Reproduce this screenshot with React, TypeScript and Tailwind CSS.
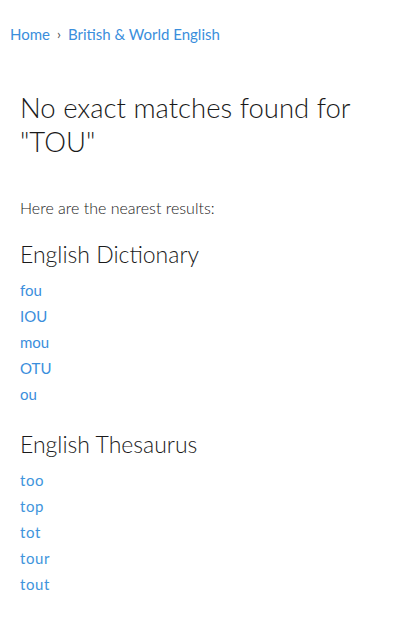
import React from "react";

const dict = ["fou", "IOU", "mou", "OTU", "ou"];
const thes = ["too", "top", "tot", "tour", "tout"];

export default function App() {
  return (
    <div className="w-[400px] min-h-[639px] bg-white text-[#222] font-['Lato',sans-serif]">
      <nav className="flex items-center pl-[10px] pt-[24px] text-[15px] leading-[20px] text-[#3a8edc]">
        <a>Home</a>
        <span className="mx-[7px] text-[#555] text-[14px]">›</span>
        <a>British &amp; World English</a>
      </nav>
      <main className="px-[20px]">
        <h1 className="mt-[47px] text-[27.5px] leading-[34px] font-light text-[#1a1a1a]">
          No exact matches found for "TOU"
        </h1>
        <p className="mt-[39px] text-[16px] leading-[20px] font-light text-[#1a1a1a]">Here are the nearest results:</p>
        <h2 className="mt-[22px] text-[23px] leading-[28px] font-light text-[#1a1a1a]">English Dictionary</h2>
        <ul className="mt-[9px] flex flex-col">
          {dict.map((w) => (
            <li key={w} className="h-[26px] text-[15px] leading-[26px] text-[#3a8edc]">
              {w}
            </li>
          ))}
        </ul>
        <h2 className="mt-[23px] text-[23px] leading-[28px] font-light text-[#1a1a1a]">English Thesaurus</h2>
        <ul className="mt-[9px] flex flex-col">
          {thes.map((w) => (
            <li key={w} className="h-[26px] text-[15px] leading-[26px] tracking-[0.6px] text-[#4094dc]">
              {w}
            </li>
          ))}
        </ul>
      </main>
    </div>
  );
}
